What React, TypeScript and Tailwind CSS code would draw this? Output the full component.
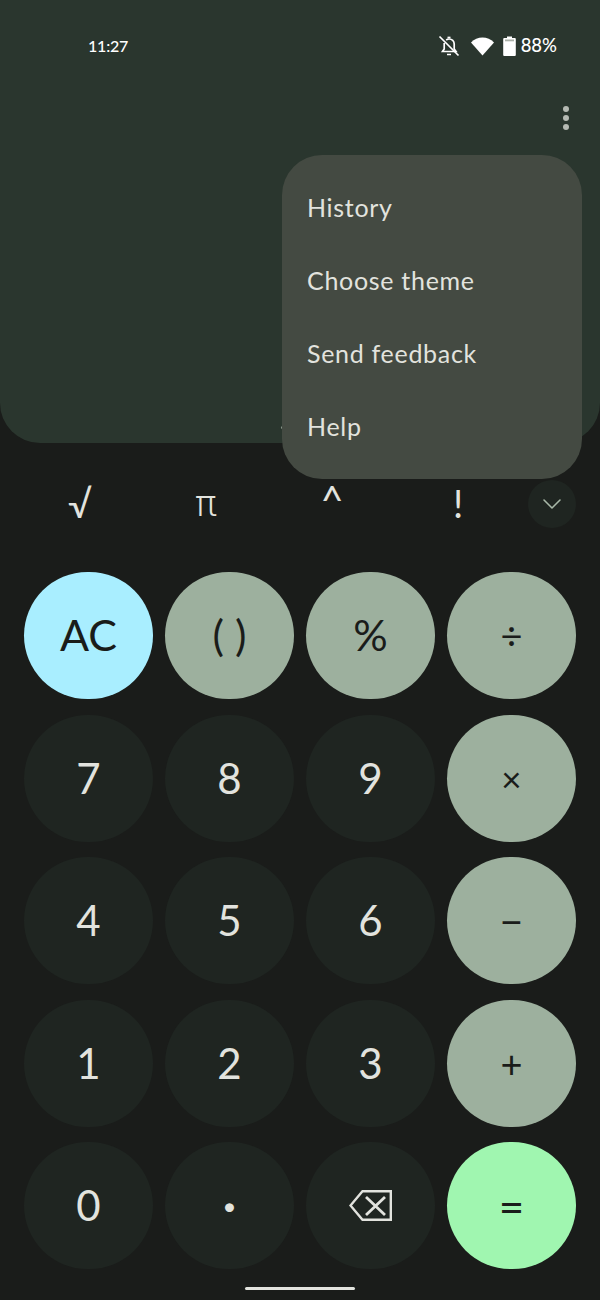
import { ChevronDown } from "lucide-react";

const menuItems = ["History", "Choose theme", "Send feedback", "Help"];
const sciKeys = [
  { label: "√", cls: "text-[38px] -translate-y-[4px]" },
  { label: "π", cls: "text-[36px] font-light font-['Roboto',sans-serif] -translate-y-[4px]" },
  { label: "^", cls: "text-[40px] -translate-y-[8px]" },
  { label: "!", cls: "text-[38px] -translate-y-[4px]" },
];

type Key = { label?: string; kind: "num" | "op" | "ac" | "eq"; del?: boolean; cls: string };

const keys: Key[] = [
  { label: "AC", kind: "ac", cls: "text-[43px]" },
  { label: "( )", kind: "op", cls: "text-[43px]" },
  { label: "%", kind: "op", cls: "text-[43px]" },
  { label: "÷", kind: "op", cls: "text-[38px]" },
  { label: "7", kind: "num", cls: "text-[42px]" },
  { label: "8", kind: "num", cls: "text-[42px]" },
  { label: "9", kind: "num", cls: "text-[42px]" },
  { label: "×", kind: "op", cls: "text-[35px]" },
  { label: "4", kind: "num", cls: "text-[42px]" },
  { label: "5", kind: "num", cls: "text-[42px]" },
  { label: "6", kind: "num", cls: "text-[42px]" },
  { label: "−", kind: "op", cls: "text-[41px]" },
  { label: "1", kind: "num", cls: "text-[42px]" },
  { label: "2", kind: "num", cls: "text-[42px]" },
  { label: "3", kind: "num", cls: "text-[42px]" },
  { label: "+", kind: "op", cls: "text-[38px]" },
  { label: "0", kind: "num", cls: "text-[42px]" },
  { label: "•", kind: "num", cls: "text-[24px]" },
  { kind: "num", del: true, cls: "" },
  { label: "=", kind: "eq", cls: "text-[44px]" },
];

function keyColor(kind: Key["kind"]) {
  if (kind === "ac") return "bg-[#a9eeff] text-[#1a1c1a]";
  if (kind === "op") return "bg-[#9db09e] text-[#1a1c1a]";
  if (kind === "eq") return "bg-[#a0f6b0] text-[#1a1c1a]";
  return "bg-[#1f2521] text-[#e2e3de]";
}

function BackspaceIcon() {
  return (
    <svg width="43" height="31" viewBox="0 0 43 31" fill="none" stroke="#e2e3de">
      <path d="M13.500 1.200 H41.800 V29.800 H13.500 L1.500 15.500 Z" strokeWidth="2.400" />
      <path d="M17 7 L36 25 M36 7 L17 25" strokeWidth="2.800" />
    </svg>
  );
}

export default function App() {
  return (
    <div className="relative w-[600px] h-[1300px] overflow-hidden bg-[#1a1c1a] font-['Lato','Liberation_Sans',sans-serif]">
      {/* Display */}
      <div className="h-[443px] bg-[#2a362e] rounded-b-[40px] flex flex-col">
        <div className="h-[92px] pl-[88px] pr-[43px] flex items-center justify-between text-white">
          <span className="text-[16px] font-medium tracking-[-0.2px]">11:27</span>
          <div className="flex items-center">
            <svg width="22" height="22" viewBox="0 0 22 22" fill="none" stroke="#fff" strokeWidth="1.700">
              <path d="M7 16.500h11l-1.800-2.500V9a5 5 0 0 0-5-5c-1.200 0-2.200.4-3 1M6.200 8v6L4.500 16.500h3" />
              <path d="M9.500 2.500h3" />
              <path d="M1.500 1.500l19 19M9 19.500h4" />
            </svg>
            <svg width="23" height="19" viewBox="0 0 23 19" fill="#fff" className="ml-[11px]">
              <path d="M0 5.500C3.200 2.300 7.200 0.500 11.500 0.500s8.300 1.800 11.500 5L11.500 18.500Z" />
            </svg>
            <svg width="13" height="20" viewBox="0 0 13 20" className="ml-[9px]">
              <path d="M4 0.500h5v1.500h2.800a1 1 0 0 1 1 1v16a1 1 0 0 1-1 1h-10.600a1 1 0 0 1-1-1V3a1 1 0 0 1 1-1H4Z" fill="#fff" />
              <rect x="2" y="3.500" width="9" height="1.800" fill="#aab0a8" />
            </svg>
            <span className="ml-[5px] text-[18.500px] font-medium">88%</span>
          </div>
        </div>
        <div className="flex justify-end pr-[31px] pt-[14px]">
          <div className="flex flex-col gap-[3px]">
            <span className="w-[6px] h-[6px] rounded-full bg-[#b5bab3]" />
            <span className="w-[6px] h-[6px] rounded-full bg-[#b5bab3]" />
            <span className="w-[6px] h-[6px] rounded-full bg-[#b5bab3]" />
          </div>
        </div>
        {/* Drag handle, mostly hidden by the menu */}
        <div className="mt-auto pb-[14px] flex justify-center">
          <div className="w-[38px] h-[3px] rounded-full bg-[#8a968a]" />
        </div>
      </div>

      {/* Scientific row */}
      <div className="h-[129px] pl-[17px] pr-[24px] flex items-center">
        {sciKeys.map((k) => (
          <div key={k.label} className={`h-[48px] w-[126px] flex items-center justify-center text-[#e2e3de] ${k.cls}`}>
            {k.label}
          </div>
        ))}
        <div className="ml-auto w-[48px] h-[48px] rounded-full bg-[#1f2521] flex items-center justify-center -translate-y-[4px]">
          <ChevronDown size={32} color="#a8b8a8" strokeWidth={1.200} />
        </div>
      </div>

      {/* Keypad */}
      <div className="grid grid-cols-4 gap-x-[12px] gap-y-[15.500px] px-[24px]">
        {keys.map((k, i) => (
          <div
            key={i}
            className={`h-[127px] rounded-full flex items-center justify-center ${keyColor(k.kind)} ${k.cls}`}
          >
            {k.del ? <BackspaceIcon /> : k.label}
          </div>
        ))}
      </div>

      {/* Gesture bar */}
      <div className="flex justify-center pt-[18px]">
        <div className="w-[110px] h-[3px] rounded-full bg-[#e2e3de]" />
      </div>

      {/* Overflow menu */}
      <div className="absolute left-[282px] top-[155px] w-[300px] h-[324px] rounded-[40px] bg-[#444a42] py-[16px] flex flex-col">
        {menuItems.map((m) => (
          <div key={m} className="h-[73px] pl-[25px] flex items-center text-[25px] tracking-[0.7px] text-[#e2e3de]">
            {m}
          </div>
        ))}
      </div>
    </div>
  );
}
